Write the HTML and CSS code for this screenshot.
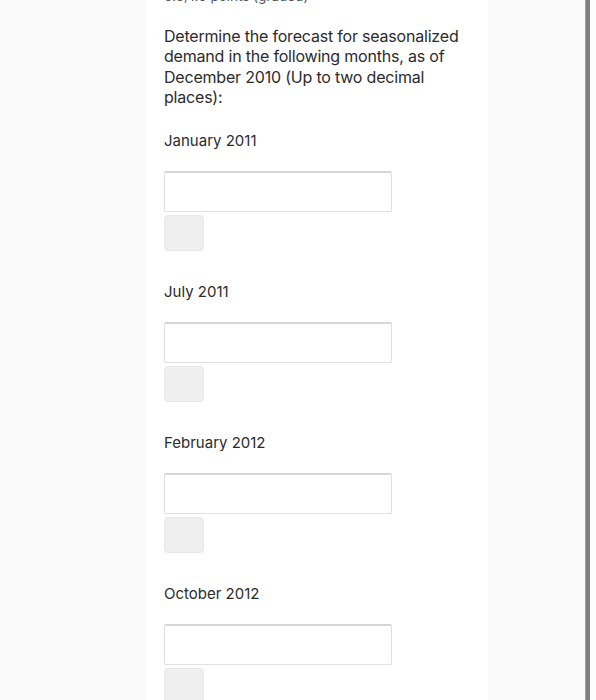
FILE: index.html
```html
<!DOCTYPE html>
<html>
<head>
<meta charset="utf-8">
<link rel="stylesheet" href="styles.css">
</head>
<body>
<div class="page">
  <div class="viewport">
    <div class="panel">
      <div class="grade">0.0/1.0 points (graded)</div>
      <p class="prompt">Determine the forecast for seasonalized demand in the following months, as of December 2010 (Up to two decimal places):</p>
      <div class="question">
        <label class="qlabel">January 2011</label>
        <input class="answer" type="text">
        <div class="status"></div>
      </div>
      <div class="question">
        <label class="qlabel">July 2011</label>
        <input class="answer" type="text">
        <div class="status"></div>
      </div>
      <div class="question">
        <label class="qlabel">February 2012</label>
        <input class="answer" type="text">
        <div class="status"></div>
      </div>
      <div class="question">
        <label class="qlabel">October 2012</label>
        <input class="answer" type="text">
        <div class="status"></div>
      </div>
    </div>
  </div>
  <div class="scrollbar"></div>
  <div class="gutter"></div>
</div>
</body>
</html>
```
FILE: styles.css
```css
html, body {
  margin: 0;
  padding: 0;
  background: #fafafa;
}
.page {
  display: flex;
  height: 700px;
  overflow: hidden;
  font-family: Inter, "Noto Sans", sans-serif;
  color: #2b2b2b;
}
.viewport {
  flex: 1;
  display: flex;
}
.panel {
  margin-left: 146px;
  width: 342px;
  box-sizing: border-box;
  background: #fff;
  padding: 0 18px;
}
.grade {
  margin-top: -12px;
  font-size: 13.5px;
  line-height: 16px;
  color: #555;
}
.prompt {
  margin: 22px 0 0;
  font-size: 16px;
  line-height: 20.3px;
  letter-spacing: -0.2px;
}
.question {
  display: flex;
  flex-direction: column;
  align-items: flex-start;
}
.qlabel {
  margin-top: 24px;
  font-size: 15px;
  line-height: 20px;
}
.answer {
  margin: 20px 0 0;
  width: 228px;
  height: 41px;
  box-sizing: border-box;
  border: 1px solid #e0e0e0;
  border-top: 2px solid #d6d6d6;
  border-radius: 2px;
  background: #fff;
  padding: 0 8px;
}
.status {
  margin-top: 3px;
  margin-bottom: 7px;
  width: 40px;
  height: 36px;
  box-sizing: border-box;
  background: #efefef;
  border: 1px solid #e8e8e8;
  border-radius: 4px;
}
.scrollbar {
  width: 5px;
  background: #7e7e7e;
  border-left: 1px solid #a0a0a0;
  box-sizing: border-box;
}
.gutter {
  width: 6px;
  background: #fcfcfc;
}
```
